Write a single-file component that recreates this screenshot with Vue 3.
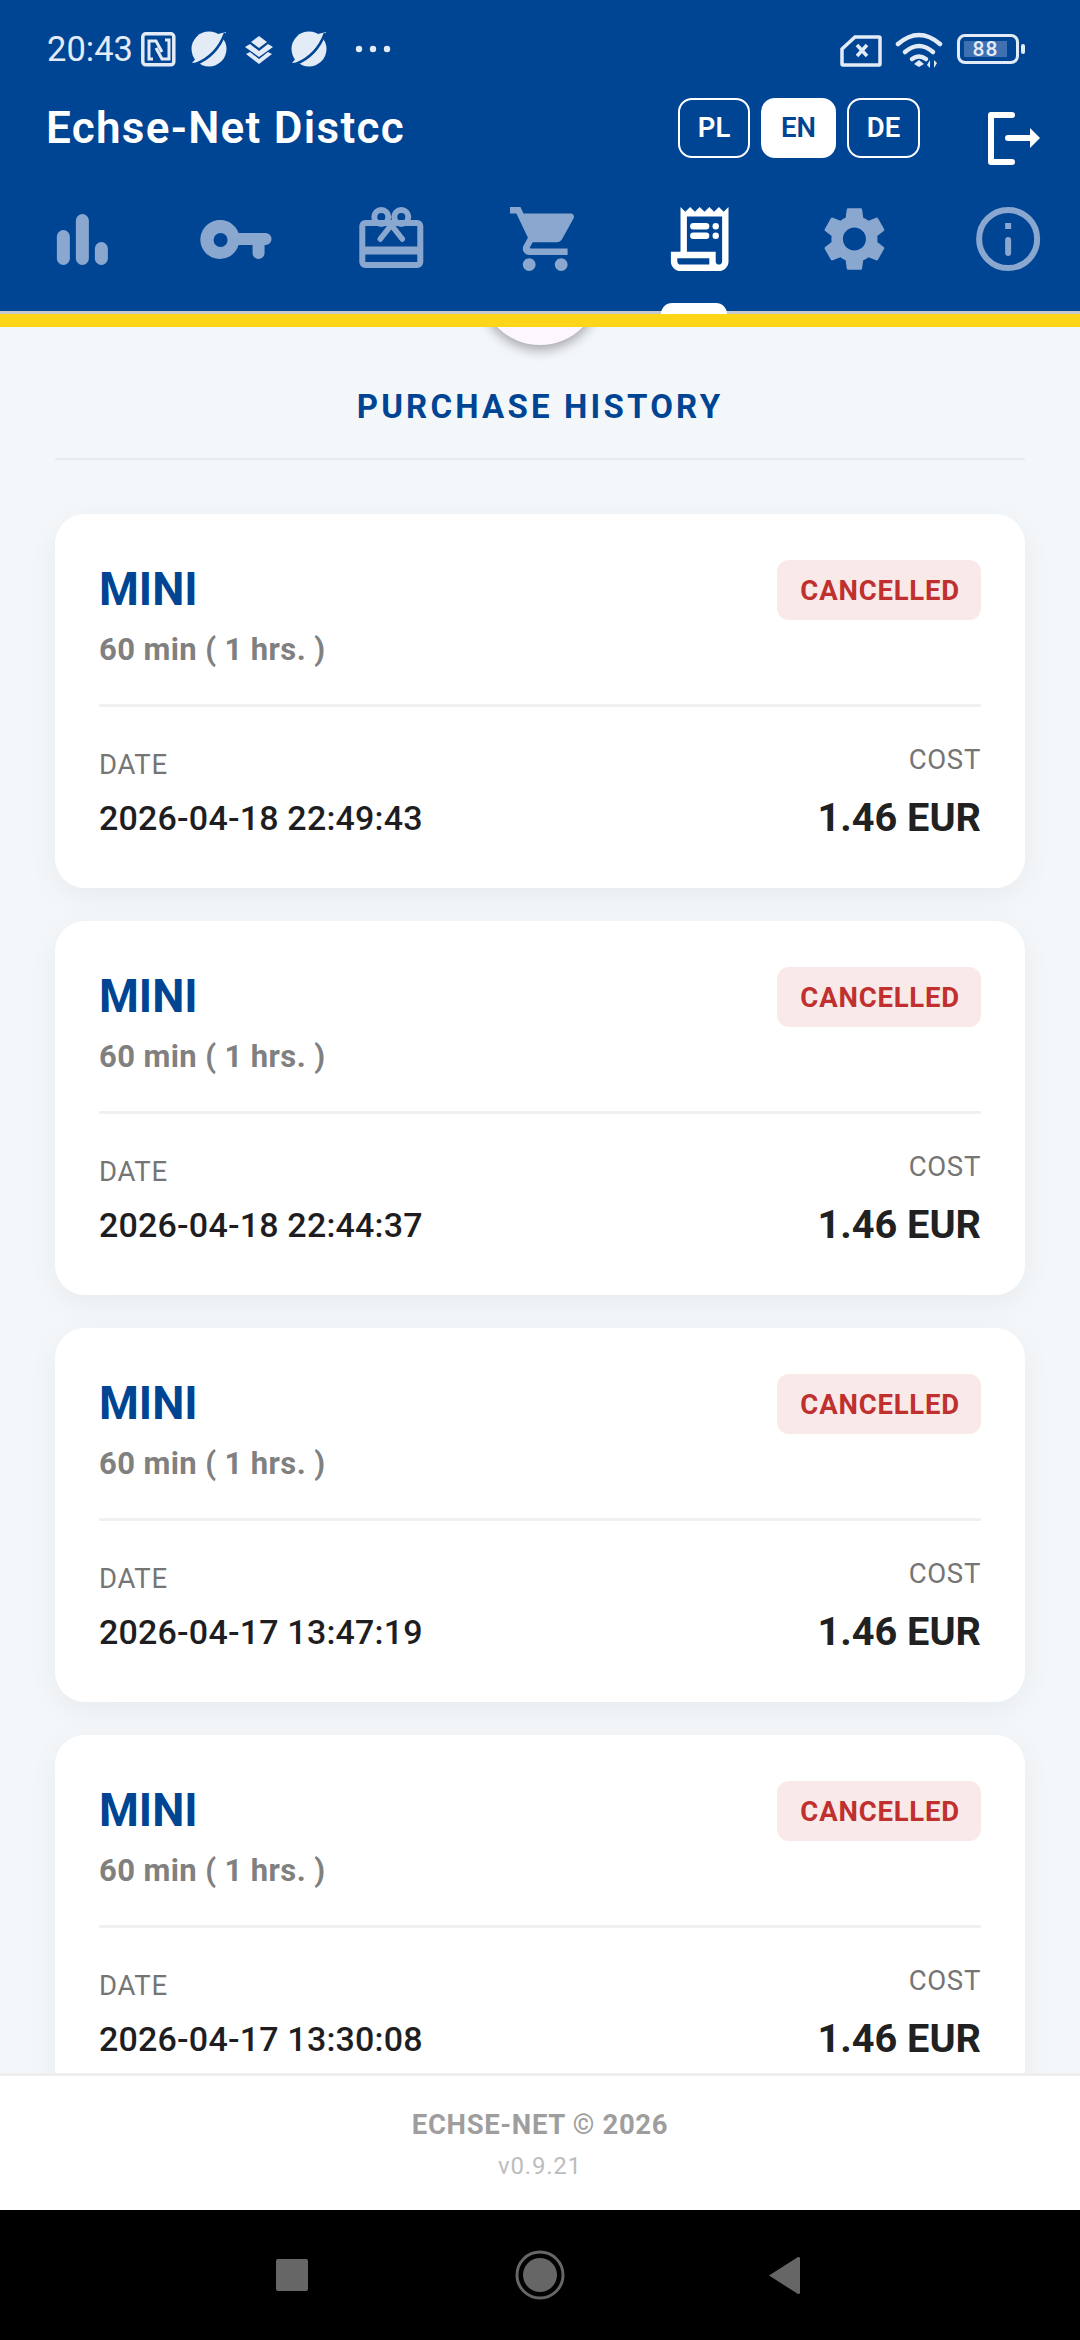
<template>
  <div class="app">
    <header class="top">
      <div class="status">
        <span class="clock">20:43</span>
        <svg class="notif" width="250" height="42" viewBox="141 28 250 42">
          <!-- nfc -->
          <rect x="142.8" y="33.8" width="31" height="31" rx="3" class="s-line" />
          <path d="M153 59h-4V41h7l6 11M165 40h4v19h-7l-6-11" class="s-line thin" />
          <!-- orb -->
          <circle cx="209" cy="49" r="17.5" class="s-fill" />
          <path d="M192 63l6-7 3 6zM226 32l-8 2 5 6z" class="s-fill" />
          <path d="M196 64C208 59 219 50 225 33" class="s-cut" />
          <!-- layers -->
          <path d="M259 36l8 6-8 6-8-6z" class="s-fill" />
          <path d="M245 47l5-3 9 7 9-7 5 3-14 10z" class="s-fill" />
          <path d="M246 54l4-2 9 7 9-7 4 2-13 10z" class="s-fill" />
          <!-- orb again -->
          <circle cx="309" cy="49" r="17.5" class="s-fill" />
          <path d="M292 63l6-7 3 6zM326 32l-8 2 5 6z" class="s-fill" />
          <path d="M296 64C308 59 319 50 325 33" class="s-cut" />
          <circle cx="359" cy="49" r="3.2" class="s-fill" />
          <circle cx="373" cy="49" r="3.2" class="s-fill" />
          <circle cx="387" cy="49" r="3.2" class="s-fill" />
        </svg>
        <div class="status-right">
          <svg width="108" height="42" viewBox="839 28 108 42">
            <path d="M855 37h24a1 1 0 0 1 1 1v26a1 1 0 0 1-1 1h-36a1 1 0 0 1-1-1V49z" class="s-line" />
            <path d="M857 45l10 11M867 45l-10 11" class="s-line" />
            <path d="M898 44Q919 26 940 44" class="s-line wide" />
            <path d="M905 52Q919 40 933 52" class="s-line wide" />
            <path d="M912 59Q919 54 926 59" class="s-line wide" />
            <path d="M919 60l5 4-5 3-5-3z" class="s-fill" />
            <path d="M930 60v8l-3-3zM934 68v-8l3 3z" class="s-fill" />
          </svg>
          <div class="battery">
            <span class="battery-level">88</span>
          </div>
          <span class="battery-nub"></span>
        </div>
      </div>

      <div class="title-row">
        <span class="app-title">Echse-Net Distcc</span>
        <div class="langs">
          <span class="lang" style="width: 72px">PL</span>
          <span class="lang active" style="width: 75px">EN</span>
          <span class="lang" style="width: 73px">DE</span>
        </div>
        <svg class="logout" width="56" height="58" viewBox="986 110 56 58">
          <path d="M1012 115h-21v47h21" />
          <path d="M1008 138h24" />
          <path d="M1030 128l10 10-10 10z" class="head" />
        </svg>
      </div>

      <nav class="tabs">
        <div class="tab">
          <svg width="100" height="72" viewBox="27.14 205 100 72">
            <rect x="57" y="230" width="13" height="35" rx="6.5" />
            <rect x="76" y="214" width="13" height="51" rx="6.5" />
            <rect x="95" y="242" width="13" height="23" rx="6.5" />
          </svg>
        </div>
        <div class="tab">
          <svg width="100" height="72" viewBox="181.43 205 100 72">
            <path fill-rule="evenodd" d="M221 220a19.5 19.5 0 0 1 18 13h27a6 6 0 0 1 0 12h-1v8a6 6 0 0 1-12 0v-8h-14a19.5 19.5 0 1 1-18-25zm0 13a7 7 0 1 0 0 14 7 7 0 0 0 0-14z" />
          </svg>
        </div>
        <div class="tab">
          <svg width="100" height="72" viewBox="335.71 205 100 72" class="outline">
            <rect x="362" y="223" width="58" height="42" rx="3" />
            <path d="M362 250.500h58" class="band" />
            <circle cx="381" cy="217" r="7" />
            <circle cx="401" cy="217" r="7" />
            <path d="M391 225l-11 14M391 225l11 14" class="round" />
          </svg>
        </div>
        <div class="tab">
          <svg width="100" height="72" viewBox="490 205 100 72">
            <path transform="translate(506.8 200.600) scale(3.2)" d="M7 18c-1.100 0-1.990.9-1.990 2S5.900 22 7 22s2-.9 2-2-.9-2-2-2zM1 2v2h2l3.600 7.590-1.350 2.450c-.16.28-.25.61-.25.96 0 1.100.9 2 2 2h12v-2H7.420c-.14 0-.25-.11-.25-.25l.03-.12.9-1.630h7.450c.75 0 1.410-.41 1.750-1.030l3.580-6.490c.08-.14.12-.31.12-.48 0-.55-.45-1-1-1H5.210l-.94-2H1zm16 16c-1.100 0-1.990.9-1.990 2s.89 2 1.990 2 2-.9 2-2-.9-2-2-2z" />
          </svg>
        </div>
        <div class="tab current">
          <svg width="100" height="72" viewBox="644.29 205 100 72">
            <g transform="translate(661.600 200.600) scale(3.2)">
              <path d="M19.500 3.500L18 2l-1.500 1.500L15 2l-1.500 1.500L12 2l-1.500 1.500L9 2 7.500 3.500 6 2v14H3v3c0 1.660 1.340 3 3 3h12c1.660 0 3-1.340 3-3V2l-1.500 1.500zM15 20H6c-.55 0-1-.45-1-1v-1h10v2zm4-1c0 .55-.45 1-1 1s-1-.45-1-1v-3H8V5h11v14z" />
              <rect x="9" y="7" width="6" height="2" rx="1" />
              <circle cx="17" cy="8" r="1" />
              <rect x="9" y="10" width="6" height="2" rx="1" />
              <circle cx="17" cy="11" r="1" />
            </g>
          </svg>
          <span class="tab-mark"></span>
        </div>
        <div class="tab">
          <svg width="100" height="72" viewBox="798.57 205 100 72">
            <path transform="translate(815.600 200.600) scale(3.2)" d="M19.140 12.940c.04-.3.06-.61.06-.94 0-.32-.02-.64-.07-.94l2.030-1.580c.18-.14.23-.41.12-.61l-1.920-3.320c-.12-.22-.37-.29-.59-.22l-2.390.96c-.5-.38-1.030-.7-1.620-.94l-.36-2.540c-.04-.24-.24-.41-.48-.41h-3.840c-.24 0-.43.17-.47.41l-.36 2.540c-.59.24-1.130.57-1.620.94l-2.390-.96c-.22-.08-.47 0-.59.22L2.740 8.870c-.12.21-.08.47.12.61l2.030 1.580c-.05.3-.09.63-.09.94s.02.64.07.94l-2.030 1.580c-.18.14-.23.41-.12.61l1.920 3.320c.12.22.37.29.59.22l2.390-.96c.5.38 1.030.7 1.620.94l.36 2.540c.05.24.24.41.48.41h3.840c.24 0 .44-.17.47-.41l.36-2.540c.59-.24 1.130-.56 1.620-.94l2.390.96c.22.08.47 0 .59-.22l1.920-3.320c.12-.22.07-.47-.12-.61l-2.010-1.580zM12 15.600c-1.980 0-3.600-1.620-3.600-3.600s1.620-3.600 3.600-3.600 3.600 1.620 3.600 3.600-1.620 3.600-3.600 3.600z" />
          </svg>
        </div>
        <div class="tab">
          <svg width="100" height="72" viewBox="952.86 205 100 72" class="outline">
            <circle cx="1008" cy="239" r="29" />
            <rect x="1005" y="223" width="6" height="6" class="solid" />
            <rect x="1005" y="237" width="6" height="19" rx="3" class="solid" />
          </svg>
        </div>
      </nav>
    </header>
    <div class="stripe"></div>

    <main class="content">
      <div class="refresh-knob"></div>
      <h2 class="section-title">PURCHASE HISTORY</h2>
      <div class="card" v-for="(item, i) in purchases" :key="i">
        <div class="card-head">
          <div>
            <div class="plan">{{ item.plan }}</div>
            <div class="duration">{{ item.duration }}</div>
          </div>
          <span class="badge">{{ item.status }}</span>
        </div>
        <div class="card-foot">
          <div>
            <div class="label">DATE</div>
            <div class="date">{{ item.date }}</div>
          </div>
          <div class="right">
            <div class="label">COST</div>
            <div class="cost">{{ item.cost }}</div>
          </div>
        </div>
      </div>
    </main>

    <footer class="foot">
      <div class="copy">ECHSE-NET © 2026</div>
      <div class="version">v0.9.21</div>
    </footer>

    <div class="sysnav">
      <svg width="540" height="60" viewBox="270 2245 540 60">
        <rect x="276" y="2259" width="32" height="32" rx="2" />
        <circle cx="540" cy="2275" r="23" class="ring" />
        <circle cx="540" cy="2275" r="17" />
        <path d="M769 2275.500L798 2257a1.500 1.500 0 0 1 2 1.500v34a1.500 1.500 0 0 1-2 1.500z" />
      </svg>
    </div>
  </div>
</template>

<script setup>
const purchases = [
  { plan: 'MINI', duration: '60 min ( 1 hrs. )', status: 'CANCELLED', date: '2026-04-18 22:49:43', cost: '1.46 EUR' },
  { plan: 'MINI', duration: '60 min ( 1 hrs. )', status: 'CANCELLED', date: '2026-04-18 22:44:37', cost: '1.46 EUR' },
  { plan: 'MINI', duration: '60 min ( 1 hrs. )', status: 'CANCELLED', date: '2026-04-17 13:47:19', cost: '1.46 EUR' },
  { plan: 'MINI', duration: '60 min ( 1 hrs. )', status: 'CANCELLED', date: '2026-04-17 13:30:08', cost: '1.46 EUR' }
]
</script>

<style>
html, body {
  margin: 0;
  background: #f4f7fa;
}
</style>

<style scoped>
.app {
  width: 1080px;
  height: 2340px;
  display: flex;
  flex-direction: column;
  overflow: hidden;
  font-family: Roboto, "Liberation Sans", sans-serif;
}

.top {
  position: relative;
  z-index: 2;
  background: #004494;
  border-bottom: 3px solid #c4c9d0;
}

.status {
  height: 98px;
  padding: 0 55px 0 47px;
  box-sizing: border-box;
  display: flex;
  align-items: center;
  color: #e3ebf6;
}

.clock {
  width: 94px;
  font-size: 34.500px;
  line-height: 40px;
}

.s-fill {
  fill: #e3ebf6;
}

.s-line {
  fill: none;
  stroke: #e3ebf6;
  stroke-width: 3.500;
}

.s-line.thin {
  stroke-width: 3;
}

.s-line.wide {
  stroke-width: 4.500;
  stroke-linecap: round;
}

.s-cut {
  fill: none;
  stroke: #004494;
  stroke-width: 2.500;
}

.status-right {
  margin-left: auto;
  display: flex;
  align-items: center;
}

.battery {
  width: 62px;
  height: 30px;
  margin-left: 10px;
  border: 3px solid #e3ebf6;
  border-radius: 8px;
  box-sizing: border-box;
  display: flex;
  align-items: center;
  padding-left: 4px;
}

.battery-level {
  width: 43px;
  height: 16px;
  background: #3f70b2;
  font-size: 21px;
  font-weight: 500;
  line-height: 16px;
  letter-spacing: 1px;
  text-align: center;
}

.battery-nub {
  width: 4px;
  height: 10px;
  margin-left: 2px;
  border-radius: 2px;
  background: #e3ebf6;
}

.title-row {
  height: 60px;
  padding: 0 38px 0 46px;
  display: flex;
  align-items: center;
}

.app-title {
  color: #fff;
  font-size: 44px;
  font-weight: 600;
  letter-spacing: 1.300px;
}

.langs {
  margin-left: auto;
  display: flex;
  gap: 11px;
}

.lang {
  height: 60px;
  box-sizing: border-box;
  border: 2.500px solid #fff;
  border-radius: 14px;
  color: #fff;
  font-size: 27.500px;
  font-weight: 600;
  line-height: 55px;
  text-align: center;
}

.lang.active {
  background: #fff;
  color: #004494;
}

.logout {
  margin-left: 66px;
  margin-top: 22px;
  fill: none;
  stroke: #fff;
  stroke-width: 6;
  stroke-linecap: round;
  stroke-linejoin: round;
}

.logout .head {
  fill: #fff;
  stroke: none;
}

.tabs {
  margin-top: 47px;
  display: grid;
  grid-template-columns: repeat(7, 1fr);
}

.tab {
  position: relative;
  height: 106px;
  display: flex;
  justify-content: center;
  align-items: flex-start;
}

.tab svg {
  fill: #8aa8cf;
}

.tab.current svg {
  fill: #fff;
}

.tab svg.outline {
  fill: none;
  stroke: #8aa8cf;
  stroke-width: 6;
}

.tab svg .band {
  stroke-width: 8;
}

.tab svg .round {
  stroke-width: 5.500;
  stroke-linecap: round;
}

.tab svg .solid {
  fill: #8aa8cf;
  stroke: none;
}

.tab-mark {
  position: absolute;
  left: 44px;
  bottom: -3px;
  width: 66px;
  height: 11px;
  border-radius: 12px 12px 0 0;
  background: #fff;
}

.stripe {
  position: relative;
  z-index: 2;
  height: 13px;
  background: #ffd617;
}

.content {
  position: relative;
  flex: 1;
  min-height: 0;
  overflow: hidden;
  padding: 0 55px;
  background: #f4f7fa;
}

.refresh-knob {
  position: absolute;
  top: -102px;
  left: 480px;
  width: 120px;
  height: 120px;
  border-radius: 50%;
  background: #fdf7fd;
  box-shadow: 0 5px 12px rgba(0, 0, 0, 0.32);
}

.section-title {
  margin: 0 0 54px;
  padding: 60px 0 31px;
  border-bottom: 2px solid #e9ecef;
  color: #004494;
  font-size: 33px;
  font-weight: 700;
  line-height: 40px;
  letter-spacing: 3.200px;
  text-align: center;
}

.card {
  height: 374px;
  margin-bottom: 33px;
  padding: 46px 44px 0;
  box-sizing: border-box;
  border-radius: 30px;
  background: #fff;
  box-shadow: 0 8px 30px rgba(0, 0, 0, 0.05);
}

.card-head {
  height: 144px;
  border-bottom: 3px solid #f0f0f0;
  display: flex;
  justify-content: space-between;
  align-items: flex-start;
}

.plan {
  color: #004494;
  font-size: 45.500px;
  font-weight: 700;
  line-height: 60px;
}

.duration {
  margin-top: 10px;
  color: #808080;
  font-size: 31px;
  font-weight: 700;
  line-height: 40px;
  letter-spacing: 0.400px;
}

.badge {
  height: 60px;
  padding: 2px 21px 0 23px;
  box-sizing: border-box;
  border-radius: 12px;
  background: #f9e9e9;
  color: #c0302f;
  font-size: 27.500px;
  font-weight: 700;
  line-height: 58px;
  letter-spacing: 0.800px;
}

.card-foot {
  margin-top: 36px;
  display: flex;
  justify-content: space-between;
  align-items: flex-end;
}

.right {
  text-align: right;
}

.label {
  color: #757575;
  font-size: 27.500px;
  line-height: 34px;
  letter-spacing: 0.700px;
}

.date {
  margin-top: 15.500px;
  margin-bottom: 3.500px;
  color: #1e1e22;
  font-size: 34px;
  font-weight: 500;
  line-height: 40px;
  letter-spacing: 0.200px;
}

.cost {
  margin-top: 18px;
  color: #212121;
  font-size: 39.700px;
  font-weight: 700;
  line-height: 46px;
}

.foot {
  position: relative;
  z-index: 1;
  height: 137px;
  box-sizing: border-box;
  border-top: 3px solid #eee;
  background: #fff;
  padding-top: 32px;
  text-align: center;
}

.copy {
  color: #9e9e9e;
  font-size: 27.500px;
  font-weight: 700;
  line-height: 34px;
  letter-spacing: 0.650px;
}

.version {
  margin-top: 9px;
  color: #bdbdbd;
  font-size: 24px;
  line-height: 30px;
  letter-spacing: 0.800px;
}

.sysnav {
  height: 130px;
  background: #000;
  display: flex;
  justify-content: center;
  align-items: flex-start;
  padding-top: 35px;
  box-sizing: border-box;
}

.sysnav svg {
  fill: #666;
}

.sysnav .ring {
  fill: none;
  stroke: #666;
  stroke-width: 3;
}
</style>
